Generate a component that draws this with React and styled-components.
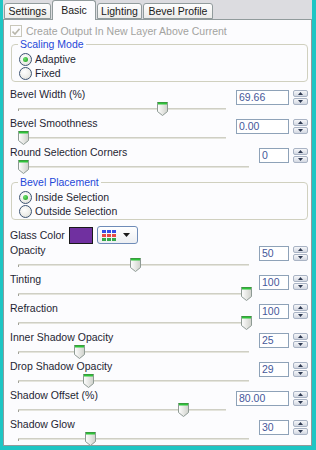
import React from 'react';
import styled, { createGlobalStyle } from 'styled-components';

const GlobalStyle = createGlobalStyle`
  html, body {
    margin: 0;
    padding: 0;
    background: #1ec6c4;
  }
  body {
    font-family: "Liberation Sans", Arial, sans-serif;
    font-size: 10.5px;
    color: #1f1f33;
  }
`;

const Frame = styled.div`
  width: 316px;
  height: 450px;
  box-sizing: border-box;
  padding: 0 4px 4px 3px;
  background: #1ec6c4;
  display: flex;
  flex-direction: column;
`;

const TabStrip = styled.div`
  height: 19px;
  flex: none;
  display: flex;
  align-items: flex-end;
  gap: 1px;
  background: #dcdce0;
  padding-left: 1px;
`;

const Tab = styled.div`
  position: relative;
  width: ${p => p.w}px;
  height: ${p => (p.active ? 20 : 16)}px;
  margin-bottom: ${p => (p.active ? -1 : 0)}px;
  z-index: ${p => (p.active ? 2 : 1)};
  box-sizing: border-box;
  border: 1px solid #919b9c;
  border-bottom: ${p => (p.active ? 'none' : '1px solid #919b9c')};
  border-radius: 3px 3px 0 0;
  background: ${p => (p.active ? '#fcfcfe' : 'linear-gradient(#fefefe, #ececea)')};
  display: flex;
  align-items: center;
  justify-content: center;
  padding-bottom: ${p => (p.active ? 2 : 0)}px;
  color: #1a1a1a;
  white-space: nowrap;
`;

const Panel = styled.div`
  flex: 1;
  min-height: 0;
  overflow: hidden;
  background: #fcfcfe;
  border: 1px solid #919b9c;
  padding: 4px 3px 0 6px;
`;

const CheckRow = styled.div`
  height: 14px;
  display: flex;
  align-items: center;
  gap: 4px;
  color: #a3a3a0;
`;

const CheckBox = styled.span`
  width: 12px;
  height: 12px;
  box-sizing: border-box;
  border: 1px solid #c9c7ba;
  display: flex;
  align-items: center;
  justify-content: center;
`;

const Group = styled.div`
  position: relative;
  margin-top: ${p => p.top}px;
  margin-left: 1px;
  height: 38px;
  box-sizing: border-box;
  border: 1px solid #d0d0bf;
  border-radius: 4px;
  padding: 7px 0 0 7px;
`;

const Legend = styled.span`
  position: absolute;
  top: -7px;
  left: 6px;
  padding: 0 2px;
  line-height: 13px;
  background: #fcfcfe;
  color: #1f48d8;
`;

const RadioRow = styled.div`
  height: 14px;
  display: flex;
  align-items: center;
  gap: 3px;
`;

const RadioCircle = styled.span`
  width: 13px;
  height: 13px;
  box-sizing: border-box;
  border-radius: 50%;
  border: 1px solid #3d5372;
  background: radial-gradient(circle at 40% 35%, #ffffff 0%, #f0f0ec 50%, #d8d8d0 100%);
  display: flex;
  align-items: center;
  justify-content: center;

  &::after {
    content: '';
    display: ${p => (p.checked ? 'block' : 'none')};
    width: 5px;
    height: 5px;
    border-radius: 50%;
    background: radial-gradient(circle at 35% 35%, #6ee06e, #1a9a1a);
  }
`;

const Row = styled.div`
  height: 29px;
  display: grid;
  grid-template-columns: 1fr auto;
  grid-template-rows: 13px 16px;
  column-gap: 4px;
`;

const Label = styled.div`
  grid-column: 1;
  grid-row: 1;
  line-height: 13px;
  white-space: nowrap;
`;

const SpinWrap = styled.div`
  grid-column: 2;
  grid-row: 1 / 3;
  align-self: start;
  margin-top: 2px;
  display: flex;
  gap: 4px;
`;

const ValueBox = styled.div`
  width: ${p => (p.wide ? 53 : 30)}px;
  height: 15px;
  box-sizing: border-box;
  border: 1px solid #8ea2b8;
  background: #fff;
  padding-left: 2px;
  line-height: 13px;
  color: #46589a;
`;

const SpinCol = styled.div`
  width: 15px;
  height: 15px;
  display: flex;
  flex-direction: column;
  gap: 1px;
`;

const SpinBtn = styled.div`
  flex: 1;
  box-sizing: border-box;
  border: 1px solid #a9b3c4;
  border-radius: 2px;
  background: linear-gradient(#f6f7fa, #d3d8e2);
  display: flex;
  align-items: center;
  justify-content: center;
`;

const SliderArea = styled.div`
  grid-column: 1;
  grid-row: 2;
  position: relative;
  margin: 0 6px 0 8px;
`;

const Track = styled.div`
  position: absolute;
  left: 0;
  right: 0;
  top: 7px;
  height: 1px;
  background: #cfcfc4;
  border-bottom: 1px solid #e4e4dc;

  &::before {
    content: '';
    position: absolute;
    left: 0;
    top: 1px;
    width: 1px;
    height: 2px;
    background: #a0a098;
  }
`;

const ThumbWrap = styled.div`
  position: absolute;
  top: 1px;
  width: 11px;
  height: 14px;
  line-height: 0;
`;

const ColorRow = styled.div`
  margin-top: 6px;
  height: 18px;
  display: flex;
  align-items: center;
  gap: 4px;
`;

const Swatch = styled.div`
  width: 24px;
  height: 17px;
  box-sizing: border-box;
  border: 1px solid #1a1a1a;
  background: ${p => p.color};
`;

const PaletteButton = styled.div`
  width: 41px;
  height: 18px;
  box-sizing: border-box;
  border: 1px solid #6f8cb8;
  border-radius: 3px;
  background: linear-gradient(#ffffff, #eceef2);
  display: flex;
  align-items: center;
  padding-left: 4px;
  gap: 7px;
`;

const PaletteGrid = styled.div`
  display: grid;
  grid-template-columns: repeat(3, 4px);
  grid-template-rows: repeat(3, 3px);
  gap: 1px;
`;

const Cell = styled.span`
  background: ${p => p.c};
`;

const Arrow = ({ up }) => (
  <svg width="5" height="3" viewBox="0 0 5 3">
    <path d={up ? 'M0 3 L2.5 0 L5 3 Z' : 'M0 0 L2.5 3 L5 0 Z'} fill="#2e3a52" />
  </svg>
);

const Thumb = () => (
  <svg width="11" height="14" viewBox="0 0 11 14">
    <defs>
      <linearGradient id="thumbFill" x1="0" x2="1" y1="0" y2="0">
        <stop offset="0" stopColor="#ffffff" />
        <stop offset="1" stopColor="#cfd1cb" />
      </linearGradient>
    </defs>
    <path d="M0.5 0.5 H10.5 V9.5 L5.5 13.5 L0.5 9.5 Z" fill="url(#thumbFill)" stroke="#8e9a94" />
    <path d="M1 1.5 H10" stroke="#2ec43a" strokeWidth="2" />
    <path d="M0.5 0.5 H10.5" stroke="#3a9a3e" strokeWidth="1" />
  </svg>
);

const SliderRow = ({ label, value, max = 100, wide }) => {
  const frac = Math.min(1, parseFloat(value) / max);
  return (
    <Row>
      <Label>{label}</Label>
      <SliderArea>
        <Track />
        <ThumbWrap style={{ left: `calc((100% - 8px) * ${frac})` }}>
          <Thumb />
        </ThumbWrap>
      </SliderArea>
      <SpinWrap>
        <ValueBox wide={wide}>{value}</ValueBox>
        <SpinCol>
          <SpinBtn><Arrow up /></SpinBtn>
          <SpinBtn><Arrow /></SpinBtn>
        </SpinCol>
      </SpinWrap>
    </Row>
  );
};

const Radio = ({ checked, children }) => (
  <RadioRow>
    <RadioCircle checked={checked} />
    <span>{children}</span>
  </RadioRow>
);

const tabs = [
  { name: 'Settings', w: 47 },
  { name: 'Basic', w: 44, active: true },
  { name: 'Lighting', w: 45 },
  { name: 'Bevel Profile', w: 70 },
];

const palette = ['#3650e6', '#3650e6', '#3650e6', '#e64848', '#e64848', '#e64848', '#36a84a', '#36a84a', '#36a84a'];

export default function App() {
  return (
    <>
      <GlobalStyle />
      <Frame>
        <TabStrip>
          {tabs.map(t => (
            <Tab key={t.name} w={t.w} active={t.active}>{t.name}</Tab>
          ))}
        </TabStrip>
        <Panel>
          <CheckRow>
            <CheckBox>
              <svg width="8" height="7" viewBox="0 0 8 7">
                <path d="M0.5 3.5 L3 6 L7.5 0.8" fill="none" stroke="#b8b6aa" strokeWidth="1.6" />
              </svg>
            </CheckBox>
            <span>Create Output In New Layer Above Current</span>
          </CheckRow>

          <Group top={6}>
            <Legend>Scaling Mode</Legend>
            <Radio checked>Adaptive</Radio>
            <Radio>Fixed</Radio>
          </Group>

          <div style={{ height: 6 }} />
          <SliderRow label="Bevel Width (%)" value="69.66" wide />
          <SliderRow label="Bevel Smoothness" value="0.00" wide />
          <SliderRow label="Round Selection Corners" value="0" />

          <Group top={7}>
            <Legend>Bevel Placement</Legend>
            <Radio checked>Inside Selection</Radio>
            <Radio>Outside Selection</Radio>
          </Group>

          <ColorRow>
            <span>Glass Color</span>
            <Swatch color="#7030a0" />
            <PaletteButton>
              <PaletteGrid>
                {palette.map((c, i) => <Cell key={i} c={c} />)}
              </PaletteGrid>
              <svg width="7" height="4" viewBox="0 0 7 4">
                <path d="M0 0 H7 L3.5 4 Z" fill="#1a1a1a" />
              </svg>
            </PaletteButton>
          </ColorRow>

          <SliderRow label="Opacity" value="50" />
          <SliderRow label="Tinting" value="100" />
          <SliderRow label="Refraction" value="100" />
          <SliderRow label="Inner Shadow Opacity" value="25" />
          <SliderRow label="Drop Shadow Opacity" value="29" />
          <SliderRow label="Shadow Offset (%)" value="80.00" wide />
          <SliderRow label="Shadow Glow" value="30" />
        </Panel>
      </Frame>
    </>
  );
}
